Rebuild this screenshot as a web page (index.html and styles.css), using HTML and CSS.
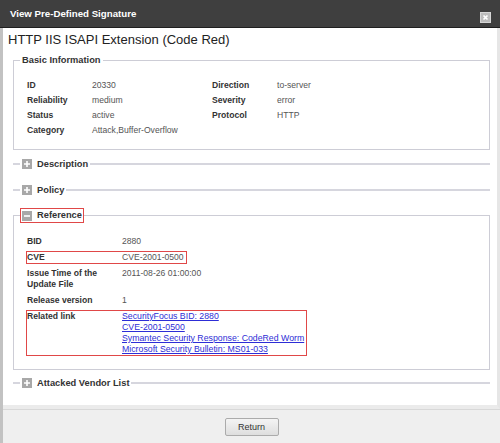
FILE: index.html
```html
<!DOCTYPE html>
<html lang="en">

<head>
    <meta charset="UTF-8">
    <title>View Pre-Defined Signature</title>
    <link rel="stylesheet" href="styles.css">
</head>

<body>
    <div class="dialog">
        <div class="dialog-title">
            <span class="dialog-caption">View Pre-Defined Signature</span>
            <button class="btn-close" title="Close">
                <svg width="11" height="11" viewBox="0 0 11 11">
                    <rect x="0.5" y="0.5" width="10" height="10" fill="#bcbcbc" stroke="#d6d6d6"/>
                    <path d="M3.5 3.5 L7.5 7.5 M7.5 3.5 L3.5 7.5" stroke="#fff" stroke-width="1.7"/>
                </svg>
            </button>
        </div>

        <div class="dialog-body">
            <div class="dialog-content">
                <h1 class="sig-name">HTTP IIS ISAPI Extension (Code Red)</h1>

                <fieldset class="group">
                    <legend>Basic Information</legend>
                    <div class="info-grid">
                        <span class="label">ID</span><span class="value">20330</span>
                        <span class="label">Direction</span><span class="value">to-server</span>
                        <span class="label">Reliability</span><span class="value">medium</span>
                        <span class="label">Severity</span><span class="value">error</span>
                        <span class="label">Status</span><span class="value">active</span>
                        <span class="label">Protocol</span><span class="value">HTTP</span>
                        <span class="label">Category</span><span class="value">Attack,Buffer-Overflow</span>
                    </div>
                </fieldset>

                <fieldset class="group collapsed">
                    <legend><span class="toggle">
                        <svg width="10" height="10" viewBox="0 0 10 10"><rect width="10" height="10" fill="#a8a8a8"/><path d="M2 5 H8 M5 2 V8" stroke="#fff" stroke-width="1.6"/></svg>
                    </span>Description</legend>
                </fieldset>

                <fieldset class="group collapsed">
                    <legend><span class="toggle">
                        <svg width="10" height="10" viewBox="0 0 10 10"><rect width="10" height="10" fill="#a8a8a8"/><path d="M2 5 H8 M5 2 V8" stroke="#fff" stroke-width="1.6"/></svg>
                    </span>Policy</legend>
                </fieldset>

                <fieldset class="group expanded">
                    <legend class="marked"><span class="toggle">
                        <svg width="10" height="10" viewBox="0 0 10 10"><rect width="10" height="10" fill="#a8a8a8"/><path d="M2 5 H8" stroke="#fff" stroke-width="1.6"/></svg>
                    </span>Reference</legend>
                    <div class="ref-list">
                        <div class="ref-row">
                            <span class="label">BID</span>
                            <span class="value">2880</span>
                        </div>
                        <div class="ref-row marked">
                            <span class="label">CVE</span>
                            <span class="value">CVE-2001-0500</span>
                        </div>
                        <div class="ref-row">
                            <span class="label">Issue Time of the Update File</span>
                            <span class="value">2011-08-26 01:00:00</span>
                        </div>
                        <div class="ref-row">
                            <span class="label">Release version</span>
                            <span class="value">1</span>
                        </div>
                        <div class="ref-row marked">
                            <span class="label">Related link</span>
                            <span class="value links">
                                <a href="#">SecurityFocus BID: 2880</a>
                                <a href="#">CVE-2001-0500</a>
                                <a href="#">Symantec Security Response: CodeRed Worm</a>
                                <a href="#">Microsoft Security Bulletin: MS01-033</a>
                            </span>
                        </div>
                    </div>
                </fieldset>

                <fieldset class="group collapsed">
                    <legend><span class="toggle">
                        <svg width="10" height="10" viewBox="0 0 10 10"><rect width="10" height="10" fill="#a8a8a8"/><path d="M2 5 H8 M5 2 V8" stroke="#fff" stroke-width="1.6"/></svg>
                    </span>Attacked Vendor List</legend>
                </fieldset>
            </div>

            <div class="dialog-footer">
                <button class="btn-return">Return</button>
            </div>
        </div>
    </div>
</body>

</html>
```

FILE: styles.css
```css
* {
    margin: 0;
    padding: 0;
    box-sizing: border-box;
    font-family: "Liberation Sans", Arial, sans-serif;
}

body {
    background-color: #efefef;
}

.dialog {
    width: 500px;
    height: 443px;
    display: flex;
    flex-direction: column;
}

/* title bar */
.dialog-title {
    height: 28px;
    display: flex;
    justify-content: space-between;
    align-items: flex-start;
    padding: 0 9px 0 10px;
    background-color: #3f3f3f;
    border-bottom: 1px solid #1f1f1f;
}

.dialog-caption {
    line-height: 27px;
    font-size: 9.7px;
    font-weight: bold;
    color: #fff;
}

.btn-close {
    margin-top: 12px;
    width: 11px;
    height: 11px;
    border: none;
    background: none;
    cursor: pointer;
    display: block;
}

.btn-close svg {
    display: block;
}

.dialog-body {
    flex: 1;
    display: flex;
    flex-direction: column;
    border-left: 3px solid #c2c2c2;
}

.dialog-content {
    background-color: #fff;
    border-right: 3px solid #e6e6e6;
    border-bottom: 4px solid #ebebeb;
    padding: 0 0 16px 5px;
}

.sig-name {
    margin-top: 4px;
    font-size: 13px;
    line-height: 16px;
    font-weight: normal;
    color: #222;
}

/* groups */
.group {
    margin: 6px 7px 0 5px;
    border: 1px solid #cdcdd6;
    min-width: 0;
}

.group legend {
    display: flex;
    align-items: center;
    gap: 5px;
    margin-left: 6px;
    padding: 0 2px;
    font-size: 9.3px;
    line-height: 12px;
    font-weight: bold;
    color: #333;
}

.group.collapsed {
    border-width: 2px 0 0;
    border-color: #d6d6de;
    margin-top: 8px;
}

.group.collapsed legend {
    margin-left: 7px;
}

.group.collapsed + .group.collapsed {
    margin-top: 14px;
}

.group.expanded {
    margin-top: 12px;
}

.group.expanded + .group.collapsed {
    margin-top: 7px;
}

.group legend.marked {
    border: 1px solid #e04848;
    padding: 0 1px;
    line-height: 13px;
}

.toggle svg {
    display: block;
}

.info-grid {
    display: grid;
    grid-template-columns: 65px 120px 65px 1fr;
    padding: 12px 13px 11px;
    font-size: 8.6px;
    line-height: 15px;
}

.label {
    font-weight: bold;
    color: #333;
}

.value {
    color: #555;
}

.ref-list {
    padding: 12px 12px 13px;
    font-size: 8.6px;
    line-height: 11px;
}

.ref-row {
    display: flex;
    width: fit-content;
    margin-bottom: 3px;
    padding-right: 2px;
    border: 1px solid transparent;
}

.ref-row:last-child {
    margin-bottom: 0;
}

.ref-row.marked {
    border-color: #e04848;
}

.ref-row .label {
    width: 95px;
    flex-shrink: 0;
}

.links a {
    display: block;
    font-size: 8.75px;
    color: #2d2dd6;
    text-decoration: underline;
}

/* footer */
.dialog-footer {
    flex: 1;
    display: flex;
    justify-content: center;
    align-items: flex-start;
    padding-top: 8px;
    background-color: #efefef;
    border-top: 1px solid #d8d8d8;
}

.btn-return {
    width: 54px;
    height: 18px;
    font-size: 9px;
    color: #333;
    background: linear-gradient(#f4f4f4, #dedede);
    border: 1px solid #ababab;
    border-radius: 2px;
    cursor: pointer;
}
```
